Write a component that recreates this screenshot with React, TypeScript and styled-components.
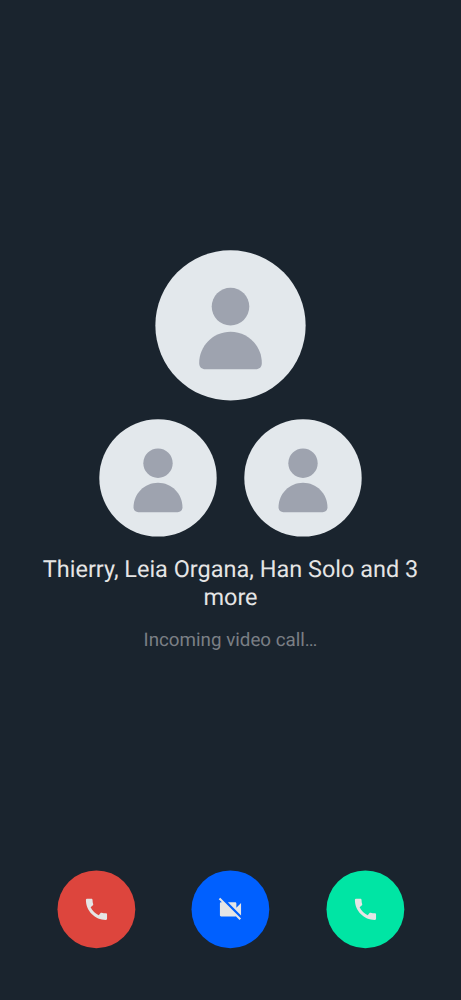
import React from "react";
import styled, { createGlobalStyle } from "styled-components";

const GlobalStyle = createGlobalStyle`
  * { box-sizing: border-box; }
  body {
    margin: 0;
    background: #1a242e;
    font-family: Roboto, "Liberation Sans", sans-serif;
    text-rendering: geometricPrecision;
  }
`;

const Screen = styled.main`
  display: flex;
  flex-direction: column;
  align-items: center;
  width: 461px;
  height: 1000px;
  padding: 250px 0 51px;
  background: #1a242e;
`;

const Avatars = styled.div`
  display: flex;
  flex-direction: column;
  align-items: center;
  gap: 18px;
`;

const AvatarRow = styled.div`
  display: flex;
  gap: 27px;
`;

const AvatarImage = styled.svg<{ $size: number }>`
  display: block;
  width: ${(p) => p.$size}px;
  height: ${(p) => p.$size}px;
`;

const Title = styled.h1`
  width: 387px;
  margin: 19px 0 0;
  color: #e5e5e5;
  font-size: 23.48px;
  font-weight: 400;
  line-height: 27.5px;
  text-align: center;
`;

const Status = styled.p`
  margin: 18px 0 0;
  color: #7a7f85;
  font-size: 18.78px;
  line-height: 22px;
  text-align: center;
`;

const Controls = styled.div`
  display: flex;
  justify-content: space-between;
  width: 100%;
  margin-top: auto;
  padding: 0 56.2px 0 56.8px;
`;

const CallButton = styled.button`
  display: block;
  width: 79px;
  height: 79px;
  padding: 0;
  border: 0;
  border-radius: 50%;
  background: none;
`;

const ButtonFace = styled.svg`
  display: block;
  width: 79px;
  height: 79px;
`;

const Avatar = ({ size, diameter }: { size: number; diameter: number }) => (
  <AvatarImage $size={size} viewBox={`0 0 ${size} ${size}`}>
    <g transform={`translate(${(size - diameter) / 2} ${(size - diameter) / 2 - 0.1}) scale(${diameter / 128})`}>
      <circle cx="64" cy="64" r="64" fill="#e3e8ec" />
      <circle cx="64" cy="48" r="16" fill="#9ea3af" />
      <path
        fill="#9ea3af"
        d="M64 69.33C49.27 69.33 37.33 81.27 37.33 96C37.33 99.5 39.4 101.33 42.67 101.33H85.33C88.6 101.33 90.67 99.5 90.67 96C90.67 81.27 78.73 69.33 64 69.33Z"
      />
    </g>
  </AvatarImage>
);

const PHONE =
  "M20.01 15.38c-1.23 0-2.42-.2-3.53-.56-.35-.12-.74-.03-1.01.24l-1.57 1.97c-2.83-1.35-5.48-3.9-6.89-6.83l1.95-1.66c.27-.28.35-.67.24-1.02-.37-1.11-.56-2.3-.56-3.53 0-.54-.45-.99-.99-.99H4.19C3.65 3 3 3.24 3 3.99 3 13.28 10.73 21 20.01 21c.71 0 .99-.63.99-1.18v-3.45c0-.54-.45-.99-.99-.99z";
const VIDEO_OFF =
  "M21 6.5l-4 4V7c0-.55-.45-1-1-1H9.82L21 17.18V6.5zM3.27 2L2 3.27 4.73 6H4c-.55 0-1 .45-1 1v10c0 .55.45 1 1 1h12c.21 0 .39-.08.54-.18L19.73 21 21 19.73 3.27 2z";

const CallControl = ({ label, color, icon }: { label: string; color: string; icon: string }) => (
  <CallButton aria-label={label}>
    <ButtonFace viewBox="0 0 79 79">
      <circle cx="39.4" cy="39.3" r="38.9" fill={color} />
      <path transform="translate(25.4 25.3) scale(1.174)" fill="#e5e5e5" d={icon} />
    </ButtonFace>
  </CallButton>
);

export default function App() {
  return (
    <>
      <GlobalStyle />
      <Screen>
        <Avatars>
          <Avatar size={151} diameter={150.3} />
          <AvatarRow>
            <Avatar size={118} diameter={117.4} />
            <Avatar size={118} diameter={117.4} />
          </AvatarRow>
        </Avatars>
        <Title>Thierry, Leia Organa, Han Solo and 3 more</Title>
        <Status>Incoming video call…</Status>
        <Controls>
          <CallControl label="Decline call" color="#dd453d" icon={PHONE} />
          <CallControl label="Turn camera off" color="#0060ff" icon={VIDEO_OFF} />
          <CallControl label="Accept call" color="#00e5a4" icon={PHONE} />
        </Controls>
      </Screen>
    </>
  );
}
